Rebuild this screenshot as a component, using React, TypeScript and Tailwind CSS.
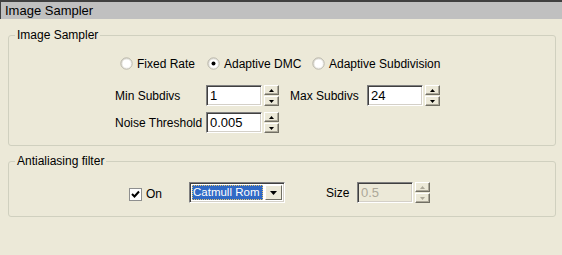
import React from 'react';

const font = { fontFamily: '"Liberation Sans", Arial, sans-serif' };

const Radio = ({ checked, label, width }: { checked?: boolean; label: string; width: string }) => (
  <div className={`flex items-center gap-[4px] ${width}`}>
    <svg width="13" height="13" viewBox="0 0 13 13" className="shrink-0">
      <defs>
        <linearGradient id="rg" x1="0" y1="0" x2="1" y2="1">
          <stop offset="0" stopColor="#d8d6cc" />
          <stop offset="1" stopColor="#ffffff" />
        </linearGradient>
      </defs>
      <circle cx="6.5" cy="6.5" r="5.7" fill="url(#rg)" stroke="#b9b7ab" strokeWidth="1" />
      <circle cx="6.5" cy="6.5" r="4" fill="#ffffff" />
      {checked && <circle cx="6.5" cy="6.5" r="2" fill="#000" />}
    </svg>
    <span className="whitespace-nowrap">{label}</span>
  </div>
);

const Spinner = ({ disabled }: { disabled?: boolean }) => {
  const arrow = disabled ? '#aca899' : '#000';
  const btn =
    'h-[10px] w-[15px] flex items-center justify-center bg-[#ece9d8] border border-t-white border-l-white border-b-[#716f64] border-r-[#716f64] shadow-[inset_-1px_-1px_0_#aca899]';
  return (
    <div className="flex flex-col gap-[1px] ml-[2px]">
      <div className={btn}>
        <svg width="5" height="3" viewBox="0 0 5 3"><path d="M2.5 0L5 3H0z" fill={arrow} /></svg>
      </div>
      <div className={btn}>
        <svg width="5" height="3" viewBox="0 0 5 3"><path d="M0 0h5L2.5 3z" fill={arrow} /></svg>
      </div>
    </div>
  );
};

const NumberBox = ({ value, disabled }: { value: string; disabled?: boolean }) => (
  <div className="flex items-center">
    <div
      className={`w-[56px] h-[21px] flex items-center pl-[3px] text-[13px] border border-t-[#808080] border-l-[#808080] border-b-white border-r-white shadow-[inset_1px_1px_0_#404040,inset_-1px_-1px_0_#d4d0c8] ${
        disabled ? 'bg-[#ece9d8] text-[#aca899]' : 'bg-white text-black'
      }`}
    >
      {value}
    </div>
    <Spinner disabled={disabled} />
  </div>
);

export default function App() {
  return (
    <div style={font} className="w-[562px] h-[255px] bg-[#ece9d8] text-[12px] text-black overflow-hidden">
      <div className="h-[19px] bg-[#c0c0c0] border-t-2 border-l border-[#404040] flex items-center pl-[4px] text-[13px]">
        Image Sampler
      </div>

      <fieldset className="ml-[8px] mt-[9px] w-[548px] border border-[#d0d0bf] rounded-[3px] pb-[12px]">
        <legend className="ml-[6px] px-[2px] leading-[14px]">Image Sampler</legend>

        <div className="mt-[14px] h-[15px] flex items-center pl-[111px]">
          <Radio label="Fixed Rate" width="w-[87px]" />
          <Radio label="Adaptive DMC" checked width="w-[105px]" />
          <Radio label="Adaptive Subdivision" width="w-[140px]" />
        </div>

        <div className="mt-[14px] flex items-center pl-[106px]">
          <span className="w-[91px] whitespace-nowrap">Min Subdivs</span>
          <NumberBox value="1" />
          <span className="ml-[11px] w-[77px] whitespace-nowrap">Max Subdivs</span>
          <NumberBox value="24" />
        </div>

        <div className="mt-[6px] flex items-center pl-[106px]">
          <span className="w-[91px] whitespace-nowrap">Noise Threshold</span>
          <NumberBox value="0.005" />
        </div>
      </fieldset>

      <fieldset className="ml-[8px] mt-[8px] w-[548px] border border-[#d0d0bf] rounded-[3px] pb-[13px]">
        <legend className="ml-[6px] px-[2px] leading-[14px]">Antialiasing filter</legend>

        <div className="mt-[14px] h-[21px] flex items-center pl-[120px]">
          <div className="flex items-center gap-[4px] w-[60px] mt-[3px]">
            <div className="w-[13px] h-[13px] bg-white border border-[#8e8f8f] flex items-center justify-center">
              <svg width="9" height="9" viewBox="0 0 9 9">
                <path d="M1 4l2.5 2.5L8 1.5" fill="none" stroke="#000" strokeWidth="2" />
              </svg>
            </div>
            <span>On</span>
          </div>

          <div className="w-[96px] h-[21px] flex items-center border border-t-[#808080] border-l-[#808080] border-b-white border-r-white shadow-[inset_1px_1px_0_#404040,inset_-1px_-1px_0_#d4d0c8] bg-white p-[2px] gap-[2px]">
            <div className="flex-1 min-w-0 h-full bg-[#316ac5] text-white text-[11.5px] flex items-center pl-[1px] whitespace-nowrap overflow-hidden outline-1 outline-dotted outline-offset-[-1px] outline-[#e8c46a]">
              Catmull Rom
            </div>
            <div className="w-[17px] shrink-0 h-full flex items-center justify-center bg-[#ece9d8] border border-t-white border-l-white border-b-[#716f64] border-r-[#716f64]">
              <svg width="7" height="4" viewBox="0 0 7 4"><path d="M0 0h7L3.5 4z" fill="#000" /></svg>
            </div>
          </div>

          <span className="ml-[41px] w-[31px]">Size</span>
          <NumberBox value="0.5" disabled />
        </div>
      </fieldset>
    </div>
  );
}
